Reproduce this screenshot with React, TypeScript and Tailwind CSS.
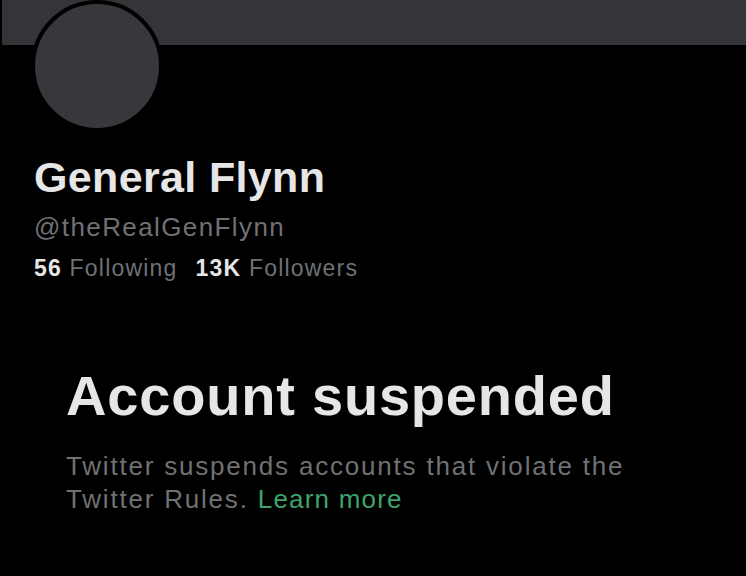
export default function App() {
  return (
    <div
      className="h-[576px] w-[746px] overflow-hidden bg-black text-[#e6e6e6]"
      style={{ fontFamily: '"Liberation Sans", Arial, sans-serif' }}
    >
      {/* banner */}
      <div className="ml-[2px] h-[45px] bg-[#333538]" />

      {/* avatar overlapping banner */}
      <div className="relative h-[104px]">
        <div className="absolute left-[31px] top-[-45px] h-[132px] w-[132px] rounded-full border-[4px] border-black bg-[#36383b]" />
      </div>

      <div className="pl-[34px]">
        <h1 className="text-[43px] font-bold leading-[56px] tracking-[0.35px]">
          General Flynn
        </h1>
        <div className="mt-[4px] text-[26px] leading-[36px] tracking-[1.4px] text-[#6f7175]">
          @theRealGenFlynn
        </div>
        <div className="mt-[7px] flex gap-[18px] text-[23px] leading-[32px] tracking-[1.2px]">
          <span>
            <span className="font-bold">56</span>{' '}
            <span className="text-[#6f7175]">Following</span>
          </span>
          <span>
            <span className="font-bold">13K</span>{' '}
            <span className="text-[#6f7175]">Followers</span>
          </span>
        </div>
      </div>

      <div className="pl-[66px] pt-[80px]">
        <h2 className="text-[56px] font-bold leading-[64px] tracking-[0.8px]">
          Account suspended
        </h2>
        <p className="mt-[22px] w-[600px] text-[26px] leading-[33px] tracking-[1.8px] text-[#6f7175]">
          Twitter suspends accounts that violate the Twitter Rules.{' '}
          <span className="tracking-[1.2px] text-[#3ea36d]">Learn more</span>
        </p>
      </div>
    </div>
  );
}
